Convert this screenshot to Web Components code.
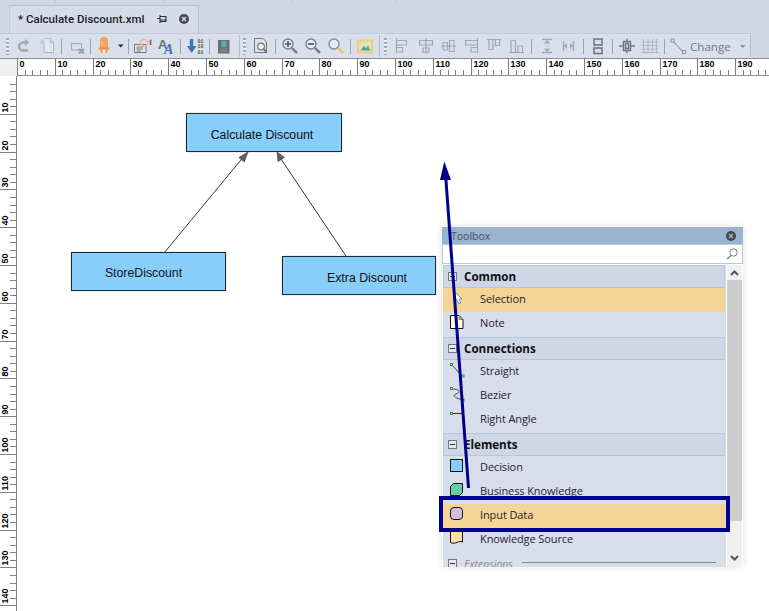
<!DOCTYPE html>
<html>
<head>
<meta charset="utf-8">
<title>Calculate Discount</title>
<style>
  html, body { margin: 0; padding: 0; height: 100%; overflow: hidden; background: #fff; }
  body { font-family: "Open Sans", "Liberation Sans", sans-serif; }
</style>
</head>
<body>
<app-shell>
  <doc-tabs slot="tabs" label="* Calculate Discount.xml"></doc-tabs>
  <tool-bar slot="toolbar">
    <tb-grip gap="6"></tb-grip>
    <tb-icon name="redo" w="12" gap="9"></tb-icon>
    <tb-icon name="newdoc" w="15" gap="9"></tb-icon>
    <tb-sep gap="7"></tb-sep>
    <tb-icon name="del" w="14" gap="9"></tb-icon>
    <tb-sep gap="5"></tb-sep>
    <tb-icon name="led" w="12" gap="7"></tb-icon>
    <tb-icon name="caret" w="7" gap="7"></tb-icon>
    <tb-sep gap="4"></tb-sep>
    <tb-icon name="note" w="18" gap="5"></tb-icon>
    <tb-icon name="font" w="17" gap="6"></tb-icon>
    <tb-sep gap="5"></tb-sep>
    <tb-icon name="sort" w="17" gap="6"></tb-icon>
    <tb-sep gap="5"></tb-sep>
    <tb-icon name="book" w="14" gap="7"></tb-icon>
    <tb-sep gap="8" end></tb-sep>
    <tb-grip gap="3"></tb-grip>
    <tb-icon name="docmag" w="15" gap="8"></tb-icon>
    <tb-sep gap="6"></tb-sep>
    <tb-icon name="zoomin" w="16" gap="6"></tb-icon>
    <tb-icon name="zoomout" w="17" gap="7"></tb-icon>
    <tb-icon name="zoomfit" w="17" gap="6"></tb-icon>
    <tb-sep gap="5"></tb-sep>
    <tb-icon name="image" w="16" gap="6"></tb-icon>
    <tb-sep gap="6" end></tb-sep>
    <tb-grip gap="4"></tb-grip>
    <tb-icon name="al1" w="15" gap="9"></tb-icon>
    <tb-icon name="al2" w="14" gap="8"></tb-icon>
    <tb-icon name="al3" w="15" gap="8"></tb-icon>
    <tb-icon name="al4" w="13" gap="9"></tb-icon>
    <tb-icon name="al5" w="14" gap="9"></tb-icon>
    <tb-icon name="al6" w="15" gap="8"></tb-icon>
    <tb-sep gap="7"></tb-sep>
    <tb-icon name="vspace" w="12" gap="9"></tb-icon>
    <tb-icon name="hspace" w="13" gap="9"></tb-icon>
    <tb-sep gap="8"></tb-sep>
    <tb-icon name="stack" w="10" gap="9"></tb-icon>
    <tb-sep gap="9"></tb-sep>
    <tb-icon name="comp" w="16" gap="6"></tb-icon>
    <tb-icon name="grid" w="18" gap="6"></tb-icon>
    <tb-sep gap="5"></tb-sep>
    <tb-icon name="conn" w="16" gap="5"></tb-icon>
    <tb-label gap="4">Change</tb-label>
    <tb-icon name="caretgrey" w="7" gap="9"></tb-icon>
    <tb-sep gap="4" end></tb-sep>
  </tool-bar>
  <h-ruler slot="hruler"></h-ruler>
  <v-ruler slot="vruler"></v-ruler>
  <diagram-canvas slot="canvas">
    <dmn-node style="left:186px;top:113px;width:154px;height:37px" shift="-2" drop="2">Calculate Discount</dmn-node>
    <dmn-node style="left:71px;top:252px;width:153px;height:37px" shift="-5" drop="1">StoreDiscount</dmn-node>
    <dmn-node style="left:282px;top:256px;width:152px;height:37px" shift="8" drop="2">Extra Discount</dmn-node>
    <tool-box style="left:442px;top:227px">
      <tb-section label="Common">
        <tb-item label="Selection" icon="cursor" selected></tb-item>
        <tb-item label="Note" icon="noteitem"></tb-item>
      </tb-section>
      <tb-section label="Connections">
        <tb-item label="Straight" icon="straight"></tb-item>
        <tb-item label="Bezier" icon="bezier"></tb-item>
        <tb-item label="Right Angle" icon="right"></tb-item>
      </tb-section>
      <tb-section label="Elements">
        <tb-item label="Decision" icon="decision"></tb-item>
        <tb-item label="Business Knowledge" icon="knowledge"></tb-item>
        <tb-item label="Input Data" icon="input" selected></tb-item>
        <tb-item label="Knowledge Source" icon="source"></tb-item>
      </tb-section>
      <tb-section label="Extensions" collapsed-style></tb-section>
    </tool-box>
    <call-out></call-out>
  </diagram-canvas>
</app-shell>

<script>
// icons for the toolbar: 16px tall, x from 0 to the w of the tb-icon
const ICONS = {
  redo: `<path d="M9 5.5 H5 a4 4 0 0 0 0 8 h5" transform="translate(0 -1)" fill="none" stroke="#a8a8a8" stroke-width="2.4"/><path d="M7 1 l4 3.5 -4 3.5z" fill="#a8a8a8"/>`,
  newdoc: `<path d="M5 5.5 V14.5 H14.5 V4.5 L11 .5 H6" fill="#e4e7ef" stroke="#b4b6bc"/><path d="M11 .5 V4.5 H14.5" fill="none" stroke="#b4b6bc"/><path d="M3.5 1 V7 M.5 4 H6.5 M1.5 2 L5.5 6 M5.5 2 L1.5 6" stroke="#c2c4ca"/>`,
  del: `<path d="M.5 5.5 H10.5 V12 H.5z" fill="none" stroke="#a5a8b0"/><path d="M8 11 L13 15.5 M13 11 L8 15.5" stroke="#9da0a8" stroke-width="2"/>`,
  led: `<path d="M2 13 V6 a4 4 0 0 1 8 0 V13z" fill="#f2a35e" transform="translate(0 -3)"/><path d="M.5 10.5 H11.5" stroke="#ee9442" stroke-width="2"/><path d="M3.5 11 V15 M8.5 11 V15" stroke="#ee9442" stroke-width="1.6"/><path d="M4 3 V7" stroke="#f8cda6"/>`,
  caret: `<path d="M1 6.5 H6.5 L3.7 9.5z" fill="#222"/>`,
  caretgrey: `<path d="M1 7 H6.5 L3.7 10z" fill="#8d8f96"/>`,
  note: `<path d="M.5 6.5 H12 V14.5 H.5z" fill="#e6e8ef" stroke="#777"/><path d="M2.5 9 H9 M2.5 11 H9 M2.5 13 H7" stroke="#777"/><circle cx="10" cy="5" r="3.6" fill="none" stroke="#eeb0a0" stroke-width="1.4"/><path d="M6 4.5 L10 8 M13 4 L17.5 2.5 V7" fill="none" stroke="#eeb0a0"/><path d="M16.5 1.5 V7" stroke="#666" stroke-width="1.4"/>`,
  font: `<text x="0" y="11" font-family="Liberation Sans" font-weight="700" font-size="13" fill="#6d7077">A</text><text x="6" y="15.5" font-family="Liberation Serif" font-style="italic" font-weight="700" font-size="14" fill="#3f74b4">A</text>`,
  sort: `<path d="M4.5 1 V9" stroke="#3f74b4" stroke-width="3.4"/><path d="M0 8 H9.4 L4.7 15z" fill="#3f74b4"/><text x="10.5" y="4.6" font-family="Liberation Mono" font-weight="700" font-size="5" fill="#555">01</text><text x="10.5" y="10.2" font-family="Liberation Mono" font-weight="700" font-size="5" fill="#555">10</text><text x="10.5" y="15.8" font-family="Liberation Mono" font-weight="700" font-size="5" fill="#555">01</text>`,
  book: `<path d="M1 2 H12.5 V15.5 H1z" fill="#6c6e72"/><path d="M4.5 3 H9.5 V9 H4.5z" fill="#5fb0a0"/><path d="M3 10.5 H11 V14.5 H3z" fill="#7d7f84"/>`,
  docmag: `<path d="M.5 .5 H9 L12.5 4 V14.5 H.5z" fill="#e0e3ec" stroke="#777"/><circle cx="7" cy="8.5" r="3.4" fill="#eef0f5" stroke="#777" stroke-width="1.2"/><path d="M9.5 11 L13 14.5" stroke="#777" stroke-width="1.8"/>`,
  zoomin: `<circle cx="6" cy="6" r="5" fill="#e6ebf4" stroke="#7c7f86" stroke-width="1.4"/><path d="M3 6 H9 M6 3 V9" stroke="#3f74b4" stroke-width="2"/><path d="M10 10 L15 15" stroke="#777" stroke-width="2.4"/>`,
  zoomout: `<circle cx="6" cy="6" r="5" fill="#e6ebf4" stroke="#7c7f86" stroke-width="1.4"/><path d="M3 6 H9" stroke="#3f74b4" stroke-width="2"/><path d="M10 10 L15 15" stroke="#777" stroke-width="2.4"/>`,
  zoomfit: `<circle cx="6" cy="6" r="5" fill="#e8ebf3" stroke="#85878d" stroke-width="1.3"/><path d="M10 10 L15 15" stroke="#f0c36e" stroke-width="2.6"/>`,
  image: `<path d="M1 2.5 H15 V14.5 H1z" fill="#dfe3c8" stroke="#f0cc7c" stroke-width="2"/><path d="M3.5 12.5 L7 8 L9 10.5 L11 7.5 L13.5 12.5z" fill="#58a08e"/><circle cx="5.5" cy="6" r="1.2" fill="#eddc9c"/>`,
  al1: `<path d="M.5 0 V15 M1 2.5 H10.5 V7 H1 M1 9.5 H6.5 V14 H1" fill="none" stroke="#a4a7ae" stroke-width="1.2"/>`,
  al2: `<path d="M7 0 V15.5 M.5 2.5 H13.5 V7 H.5z M4 10 H10 V14 H4z" fill="#dadfec" stroke="#a4a7ae" stroke-width="1.2"/>`,
  al3: `<path d="M0 8 H15 M2 4.5 H6.5 V12 H2z M8.5 2.5 H13 V13.5 H8.5z" fill="#dadfec" stroke="#a4a7ae" stroke-width="1.2"/>`,
  al4: `<path d="M12.5 0 V15 M12 2.5 H.5 V7 H12 M12 9.5 H6 V14 H12" fill="none" stroke="#a4a7ae" stroke-width="1.2"/>`,
  al5: `<path d="M0 1.5 H14 M2 2 V11.5 H6 V2 M8.5 2 V7.5 H12.5 V2" fill="none" stroke="#a4a7ae" stroke-width="1.2"/>`,
  al6: `<path d="M0 14.5 H15 M2 14 V2.5 H6.5 V14 M9 14 V8 H13.5 V14" fill="none" stroke="#a4a7ae" stroke-width="1.2"/>`,
  vspace: `<path d="M1 1.5 H11 M1 14.5 H11" stroke="#a4a7ae" stroke-width="1.4"/><path d="M6 2 L9 5.5 H3z M6 14 L9 10.5 H3z" fill="#a4a7ae"/><path d="M3.5 7.5 H8.5 V8.5 H3.5z" fill="#c2c5cb"/>`,
  hspace: `<path d="M1.5 3 V13 M11.5 3 V13" stroke="#a4a7ae" stroke-width="1.4"/><path d="M2 8 L5 5 V11z M11 8 L8 5 V11z" fill="#a4a7ae"/>`,
  stack: `<path d="M1 1 H9 V7 H1z M1 10 H9 V15.5 H1z" fill="none" stroke="#6f7177" stroke-width="1.5"/>`,
  comp: `<path d="M4.5 3.5 H11.5 V12.5 H4.5z M6.5 5.5 H9.5 V10.5 H6.5z" fill="none" stroke="#6f7177" stroke-width="1.4"/><path d="M8 .5 V3 M8 13 V15.5 M0 8 H4 M12 8 H16" stroke="#6a9bd0" stroke-width="1.8"/>`,
  grid: `<path d="M.5 4 H17.5 M.5 7.5 H17.5 M.5 11 H17.5 M.5 14.5 H17.5 M2.5 1 V15.5 M7 1 V15.5 M11.5 1 V15.5 M15.5 1 V15.5" stroke="#b4b7bd"/>`,
  conn: `<path d="M3 3 L13 14" stroke="#808287"/><rect x="1" y="1" width="3" height="3" fill="#e6e8ef" stroke="#808287" stroke-width=".8"/><rect x="12.5" y="12.5" width="3" height="3" fill="#e6e8ef" stroke="#808287" stroke-width=".8"/>`
};

// icons of the toolbox items: 14 x 15
const ITEM_ICONS = {
  cursor: `<path d="M4.5 .5 V10.5 L7 8.5 L9 13 L11 12 L9 8 H12z" fill="#fff" stroke="#8a8f99"/>`,
  noteitem: `<path d="M.5 .5 H9 L13 4.5 V13.5 H.5z" fill="#ffffdc" stroke="#111"/><path d="M9 .5 V4.5 H13z" fill="#b8b8a8" stroke="#555" stroke-width=".6"/>`,
  straight: `<path d="M2 2 L12 13" stroke="#444"/><rect x=".5" y=".5" width="2" height="2" fill="#fff" stroke="#2a9d2a"/><rect x="12" y="12" width="2" height="2" fill="#fff" stroke="#2a9d2a"/>`,
  bezier: `<path d="M2 2 C9 2 12 5 6 7 C1 9 8 12 13 13" fill="none" stroke="#444"/><rect x=".5" y=".5" width="2" height="2" fill="#fff" stroke="#2a9d2a"/><rect x="12" y="12" width="2" height="2" fill="#fff" stroke="#2a9d2a"/>`,
  right: `<path d="M2.5 2.5 H12" stroke="#333"/><rect x=".5" y="1.5" width="2" height="2" fill="#fff" stroke="#2a9d2a"/>`,
  decision: `<rect x=".5" y=".5" width="12" height="12" fill="#87cefa" stroke="#111"/>`,
  knowledge: `<path d="M3.5 .5 H12.5 V9.5 L9.5 12.5 H.5 V3.5z" fill="#66cdaa" stroke="#111"/>`,
  input: `<rect x=".5" y=".5" width="12" height="12" rx="3.5" fill="#d8bfd8" stroke="#111"/>`,
  source: `<path d="M.5 -2 H12.5 V11 C9 9 5 14 .5 11.5z" fill="#ffdead" stroke="#111"/>`
};

function shadow (el, html) {
  const root = el.attachShadow({mode: 'open'});
  root.innerHTML = html;
  return root;
}

class AppShell extends HTMLElement {
  constructor () {
    super();
    shadow(this, `
    <style>
      :host { display: flex; flex-direction: column; width: 769px; height: 611px; overflow: hidden; }
      .work { flex: 1; display: flex; min-height: 0; }
      .rulerrow { display: flex; height: 18px; flex: none; }
      .corner { width: 17px; flex: none; background: #f0f0f0; border-top: 1px solid #8d8d8d; box-sizing: border-box; }
    </style>
    <slot name="tabs"></slot>
    <slot name="toolbar"></slot>
    <div class="rulerrow"><div class="corner"></div><slot name="hruler"></slot></div>
    <div class="work"><slot name="vruler"></slot><slot name="canvas"></slot></div>`);
  }
}

class DocTabs extends HTMLElement {
  connectedCallback () {
    if (this.shadowRoot) return;
    const mark = 'linear-gradient(#c3cadb,#c3cadb)';
    const marks = [55, 163, 292, 395, 565, 613].map(x => `${mark} ${x}px 0 / 1px 3px no-repeat`).join(',');
    shadow(this, `
    <style>
      :host { display: flex; align-items: flex-end; height: 33px; padding-left: 9px; box-sizing: border-box; background: ${marks}, #cfd6e5; flex: none; }
      .tab { display: flex; align-items: center; width: 190px; height: 28px; box-sizing: border-box; padding: 0 0 1px 8px;
        background: #d6dbe9; border: 1px solid #b9c3d6; border-bottom: 0; border-left-color: #c2cadb; }
      .name { font: 500 11.5px Roboto, sans-serif; color: #1c1c1c; width: 139px; white-space: nowrap; flex: none; }
      svg { display: block; flex: none; }
      .x { margin-left: 12px; }
    </style>
    <div class="tab">
      <span class="name">${this.getAttribute('label')}</span>
      <svg class="pin" width="10" height="10" viewBox="0 0 10 10"><path d="M3 2.5 H9 V7.5 H3z M0 4.5 H3 M3 1 V9" fill="#d6dbe9" stroke="#333" stroke-width="1.1"/><path d="M3 6 H9" stroke="#333"/></svg>
      <svg class="x" width="10" height="10" viewBox="0 0 10 10"><circle cx="5" cy="5" r="5" fill="#4a4a4e"/><path d="M3 3 L7 7 M7 3 L3 7" stroke="#d6dbe9" stroke-width="1.5"/></svg>
    </div>`);
  }
}

class ToolBar extends HTMLElement {
  constructor () {
    super();
    shadow(this, `
    <style>
      :host { display: block; height: 25px; background: #cfd6e5; flex: none; }
      .band { display: flex; align-items: center; width: 751px; height: 25px; background: #dadfec; box-sizing: border-box; border-top: 1px solid #c3cad8; }
    </style>
    <div class="band"><slot></slot></div>`);
  }
}

class TbIcon extends HTMLElement {
  connectedCallback () {
    if (this.shadowRoot) return;
    const w = this.getAttribute('w');
    shadow(this, `
    <style>
      :host { display: block; flex: none; margin-left: ${this.getAttribute('gap') || 0}px; width: ${w}px; height: 16px; }
      svg { display: block; overflow: visible; }
    </style>
    <svg width="${w}" height="16" viewBox="0 0 ${w} 16">${ICONS[this.getAttribute('name')]}</svg>`);
  }
}

class TbSep extends HTMLElement {
  connectedCallback () {
    if (this.shadowRoot) return;
    const end = this.hasAttribute('end');
    shadow(this, `
    <style>
      :host { display: block; flex: none; margin-left: ${this.getAttribute('gap') || 0}px; width: 1px;
        height: ${end ? 22 : 15}px; background: ${end ? '#b6bcc8' : '#9ea2ab'}; }
    </style>`);
  }
}

class TbGrip extends HTMLElement {
  connectedCallback () {
    if (this.shadowRoot) return;
    shadow(this, `
    <style>
      :host { display: block; flex: none; margin-left: ${this.getAttribute('gap') || 0}px; width: 3px; height: 17px;
        background: repeating-linear-gradient(to bottom, #a6abb5 0 2px, #f4f6fa 2px 3px, transparent 3px 4px); }
    </style>`);
  }
}

class TbLabel extends HTMLElement {
  connectedCallback () {
    if (this.shadowRoot) return;
    shadow(this, `
    <style>
      :host { display: block; flex: none; margin-left: ${this.getAttribute('gap') || 0}px; width: 40px; color: #75777d;
        font: 11.6px "Open Sans", sans-serif; white-space: nowrap; }
    </style>
    <slot></slot>`);
  }
}

const STEP = 37.8;
const RULER_FONT = 'font-family="Liberation Sans" font-weight="700" font-size="9" fill="#000"';

class HRuler extends HTMLElement {
  constructor () {
    super();
    let out = '';
    for (let i = 0; i <= 19; i++) {
      const x = Math.round(i * STEP) + 0.5;
      out += `<path d="M${x} 0 V17" stroke="#808080"/>`;
      out += `<text x="${x + 2}" y="8.5" ${RULER_FONT}>${i * 10}</text>`;
      for (let k = 1; k < 5; k++) {
        const mx = Math.round((i + k / 5) * STEP) + 0.5;
        out += `<path d="M${mx} 12 V17" stroke="#808080"/>`;
      }
    }
    shadow(this, `
    <style>
      :host { display: block; flex: 1; height: 18px; background: #fff; overflow: hidden; }
      svg { display: block; }
    </style>
    <svg width="752" height="18"><path d="M0 .5 H752 M0 17.5 H752" stroke="#8d8d8d"/>${out}</svg>`);
  }
}

class VRuler extends HTMLElement {
  constructor () {
    super();
    let out = '';
    for (let i = 0; i <= 14; i++) {
      const y = Math.round(i * STEP) + 0.5;
      if (i) {
        out += `<path d="M0 ${y} H17" stroke="#808080"/>`;
        out += `<text transform="translate(8 ${y - 2}) rotate(-90)" ${RULER_FONT}>${i * 10}</text>`;
      }
      for (let k = 1; k < 5; k++) {
        const my = Math.round((i + k / 5) * STEP) + 0.5;
        out += `<path d="M10 ${my} H17" stroke="#808080"/>`;
      }
    }
    shadow(this, `
    <style>
      :host { display: block; width: 17px; height: 100%; flex: none; background: #fff; overflow: hidden; }
      svg { display: block; }
    </style>
    <svg width="17" height="535"><path d="M16.5 0 V535" stroke="#808080"/>${out}</svg>`);
  }
}

class DiagramCanvas extends HTMLElement {
  constructor () {
    super();
    shadow(this, `
    <style>
      :host { display: block; position: relative; flex: 1; height: 535px; width: 752px; background: #fff; overflow: hidden; }
      /* free canvas: children are placed in page coordinates */
      .inner { position: absolute; left: -17px; top: -76px; width: 769px; height: 611px; }
      svg { position: absolute; left: 0; top: 0; }
    </style>
    <div class="inner">
      <svg width="769" height="611">
        <path d="M164 253 L245 155" stroke="#333" fill="none"/>
        <path d="M346 256 L279 156" stroke="#333" fill="none"/>
        <path d="M248 152 L244.3 161.9 L238.9 157.5z" fill="#606060" stroke="#333" stroke-width=".6"/>
        <path d="M277 152 L284.4 157.4 L278 161.5z" fill="#606060" stroke="#333" stroke-width=".6"/>
      </svg>
      <slot></slot>
    </div>`);
  }
}

class DmnNode extends HTMLElement {
  connectedCallback () {
    if (this.shadowRoot) return;
    const shift = this.getAttribute('shift') || 0;
    const drop = this.getAttribute('drop') || 0;
    shadow(this, `
    <style>
      :host { display: flex; align-items: center; justify-content: center; position: absolute; background: #87cefa;
        border: 1px solid #1c2a33; box-shadow: 0 0 1px rgba(0,0,0,.4);
        font: 12.3px "Liberation Sans", sans-serif; color: #111; white-space: nowrap; }
      span { position: relative; left: ${shift}px; top: ${drop}px; }
    </style>
    <span><slot></slot></span>`);
  }
}

class ToolBox extends HTMLElement {
  constructor () {
    super();
    shadow(this, `
    <style>
      :host { display: block; position: absolute; width: 301px; height: 339px; background: #fff; overflow: visible;
        box-shadow: 0 0 7px rgba(0,0,0,.13); font-family: "Open Sans", sans-serif; }
      .title { display: flex; align-items: center; justify-content: space-between; height: 17px; box-sizing: border-box;
        padding: 0 7px 0 9px; background: #9ab3d1; color: #4a4f58; font-size: 10.5px; }
      .search { display: flex; align-items: center; justify-content: flex-end; height: 20px; box-sizing: border-box; padding-right: 4px;
        background: #fff; border: 1px solid #bccad6; }
      .body { display: flex; height: 302px; overflow: hidden; background: #fff; margin-top: 1px; }
      .list { width: 283px; margin-left: 1px; height: 302px; overflow: hidden; background: #d9deec; flex: none; }
      .bar { width: 15px; margin-left: 1px; background: #f0f0f0; display: flex; flex-direction: column; align-items: center; }
      .thumb { width: 15px; height: 241px; background: #cdcdcd; flex: none; }
      .up { height: 15px; flex: none; display: flex; align-items: center; }
      .down { flex: 1; display: flex; align-items: flex-end; padding-bottom: 5px; }
      svg { display: block; }
    </style>
    <div class="title"><span>Toolbox</span>
      <svg width="10" height="10" viewBox="0 0 10 10"><circle cx="5" cy="5" r="5" fill="#45474c"/><path d="M3 3 L7 7 M7 3 L3 7" stroke="#9ab3d1" stroke-width="1.5"/></svg>
    </div>
    <div class="search">
      <svg width="12" height="12" viewBox="0 0 12 12"><circle cx="7.5" cy="4.5" r="3.7" fill="none" stroke="#808080"/><path d="M5 7.5 L1 11" stroke="#808080" stroke-width="1.3"/></svg>
    </div>
    <div class="body">
      <div class="list"><slot></slot></div>
      <div class="bar">
        <div class="up"><svg width="9" height="7" viewBox="0 0 9 7"><path d="M1 6 L4.5 2.5 L8 6" fill="none" stroke="#555" stroke-width="2"/></svg></div>
        <div class="thumb"></div>
        <div class="down"><svg width="9" height="7" viewBox="0 0 9 7"><path d="M1 1 L4.5 4.5 L8 1" fill="none" stroke="#555" stroke-width="2"/></svg></div>
      </div>
    </div>`);
  }
}

class TbSection extends HTMLElement {
  connectedCallback () {
    if (this.shadowRoot) return;
    const plain = this.hasAttribute('collapsed-style');
    shadow(this, `
    <style>
      :host { display: block; margin-bottom: ${plain ? 0 : 1}px; margin-top: ${plain ? -1 : 0}px; }
      .head { display: flex; align-items: center; height: 23px; box-sizing: border-box; padding-left: 4px;
        background: ${plain ? 'transparent' : '#cfd6e6'}; border: 1px solid ${plain ? 'transparent' : '#bcc6da'};
        width: 282px; font: ${plain ? 'italic 400 10.5px' : '700 11.6px'} "Open Sans", sans-serif; color: ${plain ? '#8a8d95' : '#111'}; }
      .box { width: 9px; height: 9px; box-sizing: border-box; border: 1px solid #777; background: #e4e7f0; position: relative; margin-right: 7px; flex: none; }
      .box::after { content: ""; position: absolute; left: 1px; right: 1px; top: 3px; height: 1px; background: #333; }
      .rule { flex: 1; height: 1px; background: #85888f; margin: 0 8px 3px 9px; }
    </style>
    <div class="head"><span class="box"></span><span>${this.getAttribute('label')}</span>${plain ? '<span class="rule"></span>' : ''}</div>
    <slot></slot>`);
  }
}

class TbItem extends HTMLElement {
  connectedCallback () {
    if (this.shadowRoot) return;
    shadow(this, `
    <style>
      :host { display: flex; align-items: center; height: 24px; width: 282px; box-sizing: border-box; padding-left: 7px;
        font: 11px "Open Sans", sans-serif; letter-spacing: -.1px; color: #2a1c2e; background: ${this.hasAttribute('selected') ? '#f5d497' : 'transparent'}; }
      svg { display: block; flex: none; margin: 0 16px 3px 0; overflow: visible; }
      span { padding-bottom: 4px; }
    </style>
    <svg width="14" height="15" viewBox="0 0 14 15">${ITEM_ICONS[this.getAttribute('icon')]}</svg>
    <span>${this.getAttribute('label')}</span>`);
  }
}

// the navy arrow and box drawn over the screenshot
class CallOut extends HTMLElement {
  constructor () {
    super();
    shadow(this, `
    <style>
      :host { display: block; position: absolute; left: 0; top: 0; pointer-events: none; }
      svg { display: block; }
    </style>
    <svg width="769" height="611">
      <path d="M468.5 488 L445.8 178" stroke="#00008b" stroke-width="3" fill="none"/>
      <path d="M444.3 161.5 L451 180 L440 180z" fill="#00008b"/>
      <rect x="441" y="498" width="287" height="32" fill="none" stroke="#00008b" stroke-width="4"/>
    </svg>`);
  }
}

customElements.define('app-shell', AppShell);
customElements.define('doc-tabs', DocTabs);
customElements.define('tool-bar', ToolBar);
customElements.define('tb-icon', TbIcon);
customElements.define('tb-sep', TbSep);
customElements.define('tb-grip', TbGrip);
customElements.define('tb-label', TbLabel);
customElements.define('h-ruler', HRuler);
customElements.define('v-ruler', VRuler);
customElements.define('diagram-canvas', DiagramCanvas);
customElements.define('dmn-node', DmnNode);
customElements.define('tool-box', ToolBox);
customElements.define('tb-section', TbSection);
customElements.define('tb-item', TbItem);
customElements.define('call-out', CallOut);
</script>
</body>
</html>
